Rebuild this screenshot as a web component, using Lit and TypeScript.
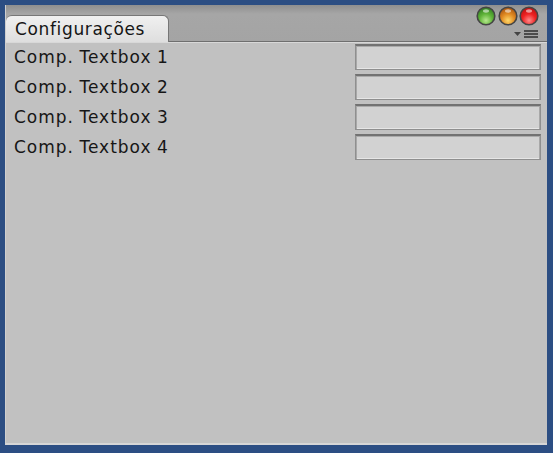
import { LitElement, html, css, svg } from "lit";
import { customElement } from "lit/decorators.js";

const dot = (id: string, a: string, b: string, c: string) => svg`
  <svg class="dot" width="20" height="20" viewBox="0 0 20 20">
    <defs>
      <radialGradient id="${id}" cx="0.5" cy="0.75" r="0.75">
        <stop offset="0" stop-color="${c}"/>
        <stop offset="0.5" stop-color="${b}"/>
        <stop offset="1" stop-color="${a}"/>
      </radialGradient>
    </defs>
    <circle cx="10" cy="10" r="8.8" fill="url(#${id})" stroke="#454545" stroke-width="1.6"/>
    <ellipse cx="10" cy="5" rx="3" ry="1.7" fill="#fff" opacity="0.55"/>
  </svg>`;

@customElement("app-root")
export class AppRoot extends LitElement {
  static styles = css`
    :host {
      display: block;
      width: 553px;
      height: 453px;
      box-sizing: border-box;
      padding: 5px 6px 8px 5px;
      background: #2c4e83;
      font-family: "DejaVu Sans", sans-serif;
      color: #111;
    }
    .window {
      height: 100%;
      display: flex;
      flex-direction: column;
      background: #c1c1c1;
      border-bottom: 2px solid #d6d6d6;
      border-left: 1px solid #cfcfcf;
      box-sizing: border-box;
    }
    .titlebar {
      height: 37px;
      flex: none;
      display: flex;
      justify-content: space-between;
      background: linear-gradient(#8f8f8f, #a6a6a6 25%, #a4a4a4);
      border-bottom: 1px solid #6f6f6f;
      box-shadow: 0 1px 0 #d8d8d8;
      box-sizing: border-box;
    }
    .tab {
      align-self: flex-end;
      width: 163px;
      height: 27px;
      margin-bottom: -1px;
      box-sizing: border-box;
      padding: 1px 0 0 9px;
      background: linear-gradient(#f0f0f0, #dedede);
      border: 1px solid #777;
      border-width: 1px 1px 0 0;
      border-radius: 6px 6px 0 0;
      font-size: 17px;
      line-height: 24px;
      letter-spacing: 0.64px;
      color: #151515;
    }
    .controls {
      display: flex;
      flex-direction: column;
      align-items: flex-end;
      padding: 1px 9px 0 0;
      gap: 4px;
    }
    .dots {
      display: flex;
      gap: 1.5px;
      margin-right: -1px;
    }
    .dot {
      display: block;
    }
    .menu {
      display: block;
    }
    .rows {
      display: flex;
      flex-direction: column;
      gap: 4px;
      padding: 2px 5px 0 8px;
    }
    .row {
      display: flex;
      align-items: center;
      justify-content: space-between;
      height: 26px;
    }
    .label {
      font-size: 17px;
      letter-spacing: 1px;
      word-spacing: -1px;
      color: #161616;
    }
    .box {
      width: 186px;
      height: 26px;
      margin-right: 1px;
      box-sizing: border-box;
      background: #d2d2d2;
      border: 1px solid #8f8f8f;
      border-top: 2px solid #727272;
      box-shadow: inset 1px 0 0 #a8a8a8, inset -1px 0 0 #a8a8a8, inset 0 -1px 0 #e6e6e6, inset 0 1px 0 #aaaaaa;
    }
  `;

  render() {
    const rows = ["Comp. Textbox 1", "Comp. Textbox 2", "Comp. Textbox 3", "Comp. Textbox 4"];
    return html`
      <div class="window">
        <div class="titlebar">
          <div class="tab">Configurações</div>
          <div class="controls">
            <div class="dots">
              ${dot("g", "#2f7a22", "#5fb338", "#b6e88e")}
              ${dot("o", "#a5500f", "#e08a22", "#ffd86a")}
              ${dot("r", "#b81010", "#ee2222", "#ff8a8a")}
            </div>
            <svg class="menu" width="24" height="9" viewBox="0 0 24 9">
              <path d="M0 2h7l-3.5 4z" fill="#444"/>
              <path d="M10 1h14M10 4h14M10 7h14" stroke="#2e2e2e" stroke-width="1.3"/>
            </svg>
          </div>
        </div>
        <div class="rows">
          ${rows.map(
            (r) => html`<div class="row"><span class="label">${r}</span><div class="box"></div></div>`
          )}
        </div>
      </div>
    `;
  }
}
